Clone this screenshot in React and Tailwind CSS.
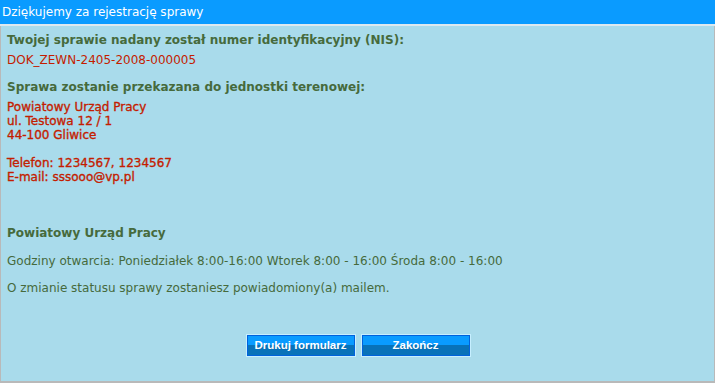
const font = { fontFamily: '"DejaVu Sans", Verdana, sans-serif' }

function Button({ children }) {
  return (
    <button className="w-[108px] h-[21px] border border-[#0062dc] outline outline-1 outline-[#c6efff] text-white font-bold text-[11.5px] leading-[19px] font-['Liberation_Sans',Arial,sans-serif] bg-[linear-gradient(to_bottom,#0a9bff_0%,#0a9bff_48%,#0872b9_48%,#0872b9_100%)]">
      {children}
    </button>
  )
}

export default function App() {
  return (
    <div className="w-[715px] h-[383px] flex flex-col bg-[#a9dbeb]" style={font}>
      <div className="h-[24px] shrink-0 bg-[#0a9bff] text-white text-[12px] pl-[2px] flex items-center">
        Dziękujemy za rejestrację sprawy
      </div>
      <div className="h-[2px] shrink-0 bg-[#dde9ef]" />
      <div className="flex-1 flex flex-col border-l border-r border-b-2 border-[#b9b9b9] px-[6px] pt-[7px] text-[12px] leading-[14px]">
        <p className="font-bold text-[#466a3c]">Twojej sprawie nadany został numer identyfikacyjny (NIS):</p>
        <p className="mt-[6px] text-[#c41d00]">DOK_ZEWN-2405-2008-000005</p>
        <p className="mt-[13px] font-bold text-[#466a3c]">Sprawa zostanie przekazana do jednostki terenowej:</p>
        <div className="mt-[6px] text-[#c41d00] [-webkit-text-stroke:0.35px_#c41d00]">
          <p>Powiatowy Urząd Pracy</p>
          <p>ul. Testowa 12 / 1</p>
          <p>44-100 Gliwice</p>
          <p className="h-[14px]" />
          <p>Telefon: 1234567, 1234567</p>
          <p>E-mail: sssooo@vp.pl</p>
        </div>
        <p className="mt-[42px] font-bold text-[#466a3c]">Powiatowy Urząd Pracy</p>
        <p className="mt-[14px] text-[#466a3c]">Godziny otwarcia: Poniedziałek 8:00-16:00 Wtorek 8:00 - 16:00 Środa 8:00 - 16:00</p>
        <p className="mt-[13px] text-[#466a3c]">O zmianie statusu sprawy zostaniesz powiadomiony(a) mailem.</p>
        <div className="mt-[40px] flex justify-center gap-[7px] pl-[1px]">
          <Button>Drukuj formularz</Button>
          <Button>Zakończ</Button>
        </div>
      </div>
    </div>
  )
}
